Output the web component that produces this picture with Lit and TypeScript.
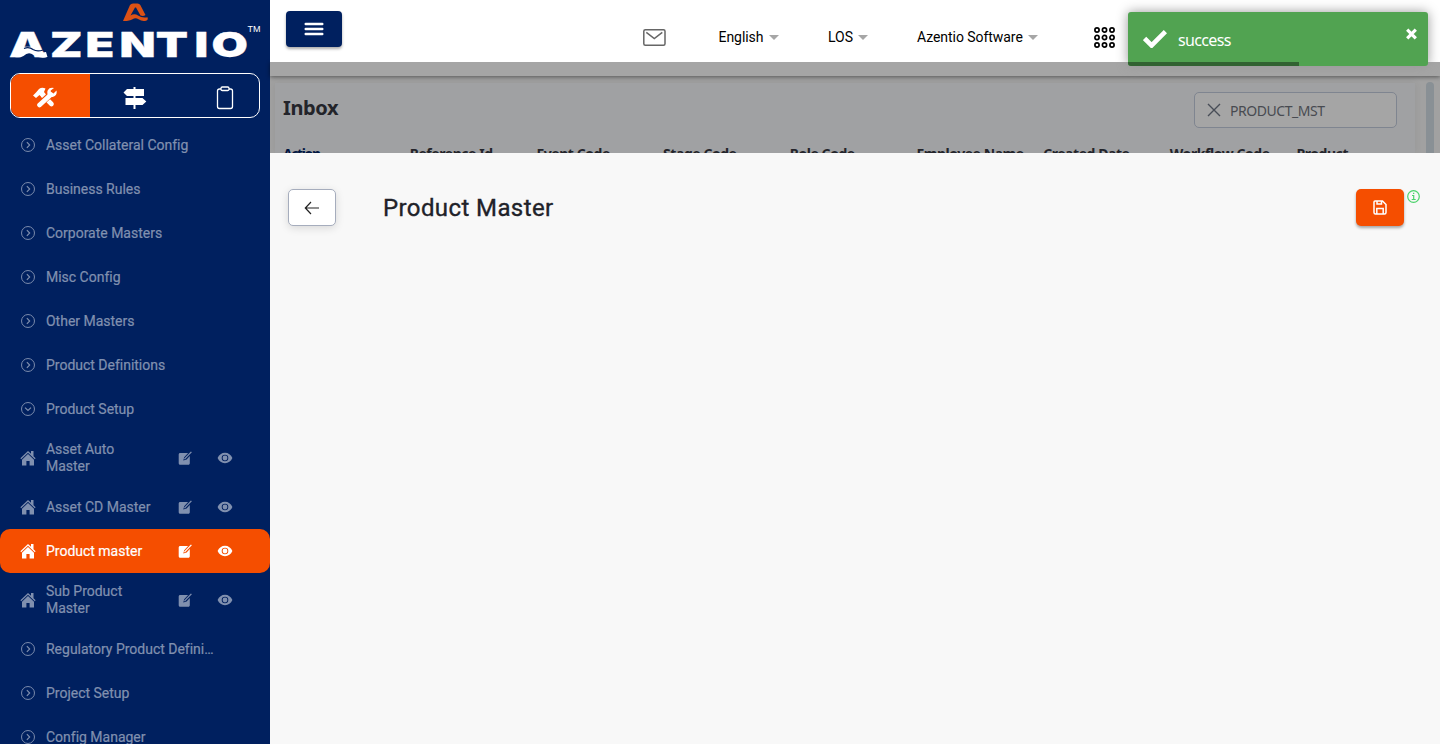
import { LitElement, html, css, svg } from "lit";
import { customElement } from "lit/decorators.js";
import { classMap } from "lit/directives/class-map.js";

type Item = { label: string; kind: "group" | "open" | "page"; active?: boolean; tall?: boolean };

const ITEMS: Item[] = [
  { label: "Asset Collateral Config", kind: "group" },
  { label: "Business Rules", kind: "group" },
  { label: "Corporate Masters", kind: "group" },
  { label: "Misc Config", kind: "group" },
  { label: "Other Masters", kind: "group" },
  { label: "Product Definitions", kind: "group" },
  { label: "Product Setup", kind: "open" },
  { label: "Asset Auto Master", kind: "page", tall: true },
  { label: "Asset CD Master", kind: "page" },
  { label: "Product master", kind: "page", active: true },
  { label: "Sub Product Master", kind: "page", tall: true },
  { label: "Regulatory Product Defini…", kind: "group" },
  { label: "Project Setup", kind: "group" },
  { label: "Config Manager", kind: "group" },
];

const COLUMNS = ["Action", "Reference Id", "Event Code", "Stage Code", "Role Code", "Employee Name", "Created Date", "Workflow Code", "Product"];

const circle = svg`<circle cx="8" cy="8" r="7.4" fill="none" stroke="currentColor" stroke-width="1.1"/>`;
const chevronRight = html`<svg width="14" height="14" viewBox="0 0 16 16">${circle}<path d="M6.7 4.8 9.9 8l-3.2 3.2" fill="none" stroke="currentColor" stroke-width="1.3"/></svg>`;
const chevronDown = html`<svg width="14" height="14" viewBox="0 0 16 16">${circle}<path d="M4.6 6.500 8 9.700l3.400-3.200" fill="none" stroke="currentColor" stroke-width="1.3"/></svg>`;
const home = html`<svg width="16" height="16" viewBox="0 0 16 16" fill="currentColor"><path d="M8 1 .4 8.300l.8.9L8 2.700l6.800 6.500.8-.9-2.100-2V1H11v2.800z"/><path d="M8 4 2 9.700V15.500h4.400V11h3.200v4.500H14V9.700z"/></svg>`;
const edit = html`<svg width="14" height="14" viewBox="0 0 14 14"><path d="M2.200 2h7.900L6.200 6.300l-.9 3.300 3.300-1L11.800 5v7.200c0 .9-.6 1.500-1.500 1.500H2.200c-.9 0-1.500-.6-1.500-1.500V3.500C.7 2.600 1.300 2 2.200 2z" fill="currentColor"/><path d="m6.400 8.100 7-7.200" stroke="currentColor" stroke-width="1.3"/></svg>`;
const eye = html`<svg width="16" height="12" viewBox="0 0 16 12"><path fill="currentColor" fill-rule="evenodd" d="M8 .8C4.700.8 2 2.800.6 6 2 9.200 4.700 11.200 8 11.200s6-2 7.400-5.200C14 2.800 11.300.8 8 .8zm0 1.900a3.300 3.300 0 1 1 0 6.600 3.300 3.300 0 0 1 0-6.600zm0 .9a2.400 2.400 0 1 0 0 4.800 2.400 2.400 0 0 0 0-4.800z"/></svg>`;

@customElement("app-root")
export class AppRoot extends LitElement {
  static styles = css`
    :host { display: block; height: 744px; font-family: Roboto, sans-serif; color: #212529; }
    * { box-sizing: border-box; }
    svg { display: block; flex: none; }
    .shell { display: grid; grid-template-columns: 270px 1170px; height: 744px; overflow: hidden; position: relative; }
    .side { background: #00205f; overflow: hidden; color: #8090af; }
    .logo { height: 73px; }
    .tabs { margin: 0 10px; height: 45px; border: 1px solid #fff; border-radius: 10px; overflow: hidden; display: grid; grid-template-columns: 79px 90px 79px; color: #fff; }
    .tab { display: flex; align-items: center; justify-content: center; padding-top: 4px; }
    .tab.on { background: #f54e00; padding-right: 12px; }
    .tab.last { padding-left: 11px; padding-top: 5px; }
    .menu { padding-top: 5px; }
    .item { height: 44px; display: flex; align-items: center; padding-left: 20px; font-size: 14px; font-weight: 400; line-height: 17px; letter-spacing: -0.01px; -webkit-text-stroke: 0.2px currentColor; }
    .item.tall { height: 54px; }
    .item.active { background: #f54e00; color: #fff; border-radius: 10px; }
    .lead { width: 26px; padding-left: 1px; }
    .lead.page { padding-left: 0; }
    .label { white-space: nowrap; }
    .label.page { width: 131.5px; white-space: normal; padding-right: 20px; }
    .eye { margin-left: 25.5px; }
    .main { display: flex; flex-direction: column; }
    .head { height: 62px; background: #fff; display: flex; flex: none; padding-left: 16px; color: #000; font-size: 14px; position: relative; z-index: 1; }
    .burger { width: 56px; height: 36px; margin-top: 11px; border-radius: 4px; background: #00205f; display: flex; align-items: center; justify-content: center; box-shadow: 0 2px 3px #0005; padding-right: 1px; padding-bottom: 1px; }
    .mail { margin: 29px 0 0 301px; }
    .drop { display: flex; align-items: center; justify-content: space-between; height: 20px; margin-top: 27px; white-space: nowrap; letter-spacing: -0.05px; }
    .d1 { margin-left: 52.500px; width: 60.500px; } .d2 { margin-left: 49px; width: 40px; } .d3 { margin-left: 49px; width: 121px; }
    .caret { border: 5px solid transparent; border-top-color: #a6a6a6; border-bottom: 0; }
    .grid { margin: 27px 0 0 56px; }
    .strip { height: 14px; background: #a5a5a5; flex: none; box-shadow: 0 1px 4px #0007; position: relative; }
    .inbox { height: 77px; flex: none; overflow: hidden; background: #a1a1a1; display: flex; justify-content: space-between; font-family: "Noto Sans", sans-serif; }
    .card { width: 1140px; margin: 7px 0 0 5px; background: #a0a1a3; box-shadow: 0 0 8px #0001; padding: 9px 0 0 8px; }
    .row { display: flex; justify-content: space-between; height: 52px; }
    .row h2 { margin: 0; font-size: 20px; line-height: 32px; letter-spacing: -0.4px; color: #23242a; }
    .search { width: 203px; height: 36px; margin-right: 18px; border: 1px solid #7f8590; border-radius: 5px; background: #a5a5a5; display: flex; align-items: center; padding-left: 12px; gap: 9px; font-size: 14px; letter-spacing: -0.45px; color: #484b51; }
    .cols { display: grid; grid-template-columns: repeat(9, 126.7px); font-size: 14px; font-weight: 700; letter-spacing: -0.45px; line-height: 20px; color: #23242a; white-space: nowrap; }
    .cols span:first-child { color: #001540; letter-spacing: -1.4px; }
    .scroll { width: 8px; height: 90px; margin: 6px 6px 0 0; border-radius: 4px; background: #899095; }
    .panel { flex: 1; background: #f8f8f8; display: flex; align-items: flex-start; padding: 36px 20px 0 18px; }
    .back { width: 48px; height: 37px; border: 1px solid #a6adbd; border-radius: 5px; background: #fff; display: flex; align-items: center; justify-content: center; box-shadow: 0 2px 8px #0002; }
    .panel h1 { margin: 0 auto 0 47px; font-size: 24px; font-weight: 400; line-height: 38px; letter-spacing: 0.4px; color: #212229; -webkit-text-stroke: 0.35px #212229; }
    .save { width: 48px; height: 37px; border-radius: 5px; background: #f54e00; display: flex; align-items: center; justify-content: center; box-shadow: 0 2px 3px #0005; }
    .info { margin: 1px 0 0 3px; }
    .toast { position: absolute; z-index: 2; left: 1128px; top: 12px; width: 300px; height: 54px; border-radius: 3px; background: #51a351; color: #fff; box-shadow: 0 0 12px #999; display: flex; align-items: center; padding-left: 15px; font: 16px "Noto Sans", sans-serif; letter-spacing: -0.65px; }
    .msg { margin-left: 11px; padding-top: 1px; flex: 1; }
    .close { align-self: flex-start; margin: 16px 11px 0 0; }
    .bar { position: absolute; left: 0; bottom: 0; width: 171px; height: 4px; background: #316231; border-bottom-left-radius: 3px; }
  `;

  private item(i: Item) {
    const page = i.kind === "page";
    return html`<div class=${classMap({ item: true, tall: !!i.tall, active: !!i.active })}>
      <div class=${classMap({ lead: true, page })}>${page ? home : i.kind === "open" ? chevronDown : chevronRight}</div>
      <div class=${classMap({ label: true, page })}>${i.label}</div>
      ${page ? html`${edit}<div class="eye">${eye}</div>` : ""}
    </div>`;
  }

  render() {
    return html`<div class="shell">
      <aside class="side">
        <svg class="logo" width="270" height="73" viewBox="0 0 270 73">
          <path fill="#dc5115" d="M123 21 130 5q1-1.500 3-1.500h4.500q2 0 2.800 1.500L145.500 15q-2 1.500-5 .6L136 7.500h-1L130.500 15.500q4-2.500 7.500 0 4 2.700 9.500 1.700 1 2.500-1.500 3.500-4 1-7.500-1.500-3-2-6 0-3 2-9.500 1.800z"/>
          <text transform="scale(1.36 1)" x="6.700 36.800 62.800 87.900 114.500 143 155.500" y="57.300" font-family="Inter" font-weight="900" font-size="34.500" fill="#fff" stroke="#fff" stroke-width=".3">AZENTIO</text>
          <path fill="#fff" d="M17 52q9-6 15-1 5 3 14 1l1.500 5q-7 2-14-2-5-4-10 1-3 2-9 1z"/>
          <path fill="none" stroke="#00205f" stroke-width="1.300" d="M24 48.500q5-2 9 1 4 2.500 10 .5"/>
          <text x="247.500" y="32" font-family="Liberation Sans" font-size="9" fill="#fff">TM</text>
        </svg>
        <div class="tabs">
          <div class="tab on"><svg width="24" height="21" viewBox="0 0 24 21" fill="none" stroke="#fff">
            <path d="M0 8.500 3 5.500l3-3.500q3-2.300 6.500-.5L11 5l2 2.500L9.500 11 6.500 8 3 11z" fill="#fff" stroke="none"/>
            <path d="m10 8.500 8.500 8.500" stroke-width="4.600" stroke-linecap="round"/>
            <path d="M6 18 17 8" stroke="#f54e00" stroke-width="6.400"/>
            <path d="M6.500 18 18 7.500" stroke-width="4.600" stroke-linecap="round"/>
            <path d="M21 1q-4.500-1-6.200 2.200-1 2.200 0 4.800 2.500 3 5.500 1.700Q24.500 8 23.500 3.500l-3 3-2.500-.7-.3-2.300z" fill="#fff" stroke="none"/></svg></div>
          <div class="tab"><svg width="24" height="22" viewBox="0 0 24 22" fill="#fff"><path d="M10.500 0h2v22h-2z"/><path d="M4 2h17v7H4L.5 5.500zM2.500 11h17l3.800 3.500-3.800 3.500h-17z"/></svg></div>
          <div class="tab last"><svg width="18" height="24" viewBox="0 0 18 24" fill="none" stroke="#fff" stroke-width="1.300"><path d="M5 3H3.500Q1.500 3 1.500 5v15.500q0 2 2 2h11q2 0 2-2V5q0-2-2-2H13"/><rect x="5" y="1" width="8" height="3.500" rx="1.300"/></svg></div>
        </div>
        <nav class="menu">${ITEMS.map((i) => this.item(i))}</nav>
      </aside>
      <main class="main">
        <header class="head">
          <div class="burger"><svg width="20" height="14" viewBox="0 0 20 14" stroke="#fff" stroke-width="2.400" stroke-linecap="round"><path d="M1.700 2h16.600M1.700 7h16.600M1.700 12h16.600"/></svg></div>
          <svg class="mail" width="23" height="17" viewBox="0 0 23 17" fill="none" stroke="#666" stroke-width="1.500"><rect x=".8" y=".8" width="21.200" height="15.400" rx="1.500"/><path d="m3.300 3.300 8 6.200 8-6.200"/></svg>
          <div class="drop d1">English<span class="caret"></span></div>
          <div class="drop d2">LOS<span class="caret"></span></div>
          <div class="drop d3">Azentio Software<span class="caret"></span></div>
          <svg class="grid" width="22" height="22" viewBox="0 0 22 22" fill="none" stroke="#000" stroke-width="1.700">${[3, 10.5, 18].map((y) => [3, 10.5, 18].map((x) => svg`<circle cx=${x} cy=${y} r="2.1"/>`))}</svg>
        </header>
        <div class="strip"></div>
        <section class="inbox">
          <div class="card">
            <div class="row"><h2>Inbox</h2>
              <div class="search"><svg width="14" height="14" viewBox="0 0 14 14" stroke="#484d57" stroke-width="1.400"><path d="m1 1 12 12M13 1 1 13"/></svg>PRODUCT_MST</div>
            </div>
            <div class="cols">${COLUMNS.map((c) => html`<span>${c}</span>`)}</div>
          </div>
          <div class="scroll"></div>
        </section>
        <section class="panel">
          <div class="back"><svg width="16" height="14" viewBox="0 0 16 14" fill="none" stroke="#222" stroke-width="1.200"><path d="M15 7H1.500M7 1 1.300 7 7 13"/></svg></div>
          <h1>Product Master</h1>
          <div class="save"><svg width="14" height="15" viewBox="0 0 14 15" fill="none" stroke="#fff" stroke-width="1.500"><path d="M2 1h7.500L13 4.500V12.500q0 1.500-1.500 1.500h-9Q1 14 1 12.500V2q0-1 1-1zM4 1v3h4.500V1M3.800 14V8.500h6.400V14"/></svg></div>
          <svg class="info" width="13" height="13" viewBox="0 0 13 13" fill="none" stroke="#4bd36b" stroke-width="1.200"><circle cx="6.500" cy="6.500" r="5.800"/><path d="M5 5.500h1.700V9.500M4.700 9.500h4M6 3.400h1.300"/></svg>
        </section>
      </main>
      <div class="toast">
        <svg width="24" height="18" viewBox="0 0 24 18" fill="none" stroke="#fff" stroke-width="4.600"><path d="m1.600 8.500 7 7L22.400 1.700"/></svg>
        <span class="msg">success</span>
        <svg class="close" width="11" height="12" viewBox="0 0 11 12" fill="none" stroke="#fff" stroke-width="3.200"><path d="m1.200 1.700 8.600 8.600M9.800 1.700 1.200 10.300"/></svg>
        <div class="bar"></div>
      </div>
    </div>`;
  }
}
